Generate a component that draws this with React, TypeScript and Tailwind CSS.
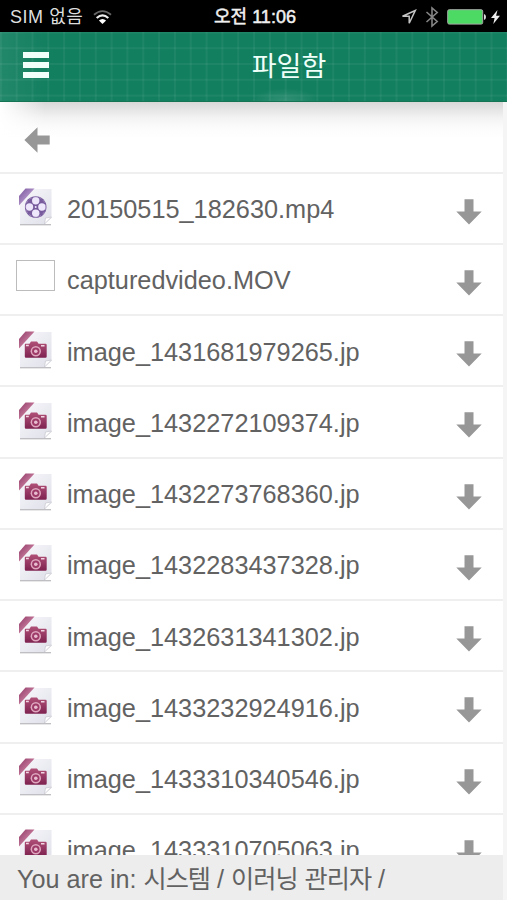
import { ReactNode } from 'react';

type FileKind = 'video' | 'image' | 'unknown';

interface FileItem {
  name: string;
  kind: FileKind;
}

const files: FileItem[] = [
  { name: '20150515_182630.mp4', kind: 'video' },
  { name: 'capturedvideo.MOV', kind: 'unknown' },
  { name: 'image_1431681979265.jp', kind: 'image' },
  { name: 'image_1432272109374.jp', kind: 'image' },
  { name: 'image_1432273768360.jp', kind: 'image' },
  { name: 'image_1432283437328.jp', kind: 'image' },
  { name: 'image_1432631341302.jp', kind: 'image' },
  { name: 'image_1433232924916.jp', kind: 'image' },
  { name: 'image_1433310340546.jp', kind: 'image' },
  { name: 'image_1433310705063.jp', kind: 'image' },
];

function StatusBar() {
  return (
    <div className="grid h-8 shrink-0 grid-cols-3 items-center bg-black pl-[10px] pr-[7px] pt-[2px] text-[18px] leading-[30px] text-[#dedede]">
      <div className="flex items-center gap-[10px] whitespace-nowrap">
        <span className="w-[73px] tracking-[0.55px]">SIM 없음</span>
        <svg width="19" height="15" viewBox="0 0 19 15" fill="none">
          <path d="M1 4.8Q9.5-2.6 18 4.8" stroke="#666" strokeWidth="1.8" />
          <path d="M3.7 8Q9.5 2.6 15.3 8" stroke="#eee" strokeWidth="2.2" />
          <path d="M9.5 14 5.9 10.5Q9.5 7.4 13.1 10.5Z" fill="#fff" />
        </svg>
      </div>
      <div className="whitespace-nowrap text-center tracking-[0.05px] text-[#f0f0f0] [-webkit-text-stroke:0.5px_#f0f0f0]">
        오전 11:06
      </div>
      <div className="flex items-center justify-end pb-px">
        <svg width="16" height="16" viewBox="0 0 16 16" fill="none" stroke="#c4c4c4" strokeWidth="1.5">
          <path d="M14.3 1.5 1.5 7.2H8.2V14.2Z" />
        </svg>
        <svg className="ml-[8px]" width="14" height="22" viewBox="0 0 14 22" fill="none" stroke="#858585" strokeWidth="1.6">
          <path d="m1.5 6 10.7 9.5L7 20V2l5.2 4.5L1.5 16" />
        </svg>
        <svg className="ml-[8px]" width="40" height="16" viewBox="0 0 40 16">
          <rect x=".7" y=".7" width="35" height="14.4" rx="1.5" fill="#4cd964" stroke="#a5aaa5" strokeWidth="1" />
          <path d="M37 5q2 .7 2 3t-2 3Z" fill="#ddd" />
        </svg>
        <svg className="ml-[4px]" width="9" height="14" viewBox="0 0 9 14" fill="#eee">
          <path d="M6.5 0 0 8h3.6L2.3 14 9 5.7H5.1Z" />
        </svg>
      </div>
    </div>
  );
}

function Header() {
  return (
    <header className="grid h-[70px] shrink-0 grid-cols-[67px_1fr] items-center border-b border-[#147454] bg-[#127f5f] bg-[linear-gradient(90deg,#ffffff0d_2px,transparent_2px),linear-gradient(180deg,#ffffff0d_2px,transparent_2px),linear-gradient(90deg,#ffffff12_0px,transparent_50px),radial-gradient(ellipse_35px_14px_at_285px_70px,#ffffff24,transparent)] bg-[length:15.83px_100%,100%_15.8px,100%_100%,100%_100%] bg-[position:-0.2px_0,0_-0.6px,0_0,0_0]">
      <button className="ml-[23px] mt-[-3px] flex w-[26px] flex-col gap-1" aria-label="menu">
        <span className="h-[6px] bg-[#f0fff9]" />
        <span className="h-[6px] bg-[#f0fff9]" />
        <span className="h-[6px] bg-[#f0fff9]" />
      </button>
      <h1 className="pl-[4px] text-center text-[27px] leading-9 text-[#effff9]">파일함</h1>
    </header>
  );
}

function DocumentIcon({ kind }: { kind: FileKind }) {
  if (kind === 'unknown') {
    return <span className="mb-[8px] block h-[31px] w-[39px] border border-[#bcbcbc] bg-white" />;
  }

  const isVideo = kind === 'video';

  return (
    <svg className="mb-[2px] ml-[2px]" width="36" height="38" viewBox="0 0 36 38">
      <defs>
        <linearGradient id="paper" x2="1" y2="1">
          <stop stopColor="#f8f8fc" />
          <stop offset="1" stopColor="#dfdfe9" />
        </linearGradient>
        <linearGradient id="pink" x2="1" y2="1">
          <stop stopColor="#903a68" />
          <stop offset=".5" stopColor="#bd6f92" />
          <stop offset="1" stopColor="#88375e" />
        </linearGradient>
        <linearGradient id="purple" x2="1" y2="1">
          <stop stopColor="#76529b" />
          <stop offset=".5" stopColor="#aa8bc3" />
          <stop offset="1" stopColor="#76509a" />
        </linearGradient>
        <linearGradient id="camera" x2="0" y2="1">
          <stop stopColor="#b05078" />
          <stop offset="1" stopColor="#7e2250" />
        </linearGradient>
      </defs>
      <path d="M2 36.7h31" stroke="#bcbcc0" strokeWidth="1.3" />
      <path d="M13 1h20.5v29l-7 6H2V13Z" fill="url(#paper)" />
      <path d="m26.5 36 1-6 6-1Z" fill="#fff" stroke="#c5c5d0" strokeWidth=".7" />
      <path d="M7.5.5H16.5L1 17.5V8Z" fill={isVideo ? 'url(#purple)' : 'url(#pink)'} />
      {isVideo ? (
        <g>
          <circle cx="17.7" cy="19" r="10.8" fill="#775b9d" />
          <g fill="#eee6fb">
            <circle cx="17.7" cy="12.8" r="3.7" />
            <circle cx="11.5" cy="19" r="3.7" />
            <circle cx="23.9" cy="19" r="3.7" />
            <circle cx="17.7" cy="25.2" r="3.7" />
            <circle cx="17.7" cy="19" r="1" />
          </g>
          <circle cx="17.7" cy="19" r="10" fill="none" stroke="#b7a1cf" strokeWidth=".6" strokeDasharray="3 2" />
        </g>
      ) : (
        <g transform="translate(.5 .3)">
          <path d="M7 12.5h4l1.5-2.2h6l1.6 2.2H27q1.2 0 1.2 1.2v11.6q0 1.2-1.2 1.2H7.5q-1.2 0-1.2-1.2V13.7Q6.3 12.5 7 12.5Z" fill="url(#camera)" />
          <path d="M7.5 14.2h2.8M22.5 14.5H26" stroke="#f2d5e2" strokeWidth="1.5" />
          <circle cx="17.3" cy="20" r="5.2" fill="#dfa8bf" />
          <circle cx="17.3" cy="20" r="3.7" fill="#9f3b69" />
          <circle cx="17.3" cy="20" r="1.8" fill="#e8bdd0" />
        </g>
      )}
    </svg>
  );
}

function ArrowIcon({ className }: { className?: string }) {
  return (
    <svg className={className} width="26" height="26" viewBox="0 0 26 26" fill="#979797">
      <path d="M8.5.3h9v12.2h8.2L13 25.6.3 12.5h8.2Z" />
    </svg>
  );
}

function Row({ children }: { children: ReactNode }) {
  return (
    <li className="flex h-[71.25px] shrink-0 items-center border-b-2 border-[#efefef] pl-4 pr-[21px]">
      {children}
    </li>
  );
}

export default function App() {
  return (
    <div className="flex h-[900px] w-[507px] flex-col overflow-hidden bg-[#f5f5f5] font-['Liberation_Sans','Noto_Sans_CJK_KR',sans-serif]">
      <StatusBar />
      <Header />

      <main className="mr-1 min-h-0 flex-1 overflow-hidden bg-white">
        <div className="flex h-[71.5px] items-center border-b-2 border-[#efefef] bg-[linear-gradient(90deg,#ffffff_0px,#ffffff00_45px),linear-gradient(180deg,#d8d8d8_0px,#e2e2e2_6px,#f3f3f3_16px,#fbfbfb_25px,#ffffff_36px)] pl-6">
          <ArrowIcon className="mt-[7px] rotate-90" />
        </div>
        <ul className="flex flex-col">
          {files.map(file => (
            <Row key={file.name}>
              <div className="w-[51px]">
                <DocumentIcon kind={file.kind} />
              </div>
              <span className="flex-1 whitespace-nowrap pt-[2px] text-[25.3px] leading-9 text-[#626262]">
                {file.name}
              </span>
              <ArrowIcon className="mt-[7px]" />
            </Row>
          ))}
        </ul>
      </main>

      <footer className="mr-1 flex h-[45px] shrink-0 items-center bg-[#ededed] pl-[17px] pt-[2px] text-[25.2px] leading-9 text-[#626262]">
        <p className="whitespace-nowrap">
          You are in: <span className="tracking-[-1px]">시스템</span> / <span className="tracking-[-1px]">이러닝</span>{' '}
          <span className="tracking-[-1px]">관리자</span> /
        </p>
      </footer>
    </div>
  );
}
